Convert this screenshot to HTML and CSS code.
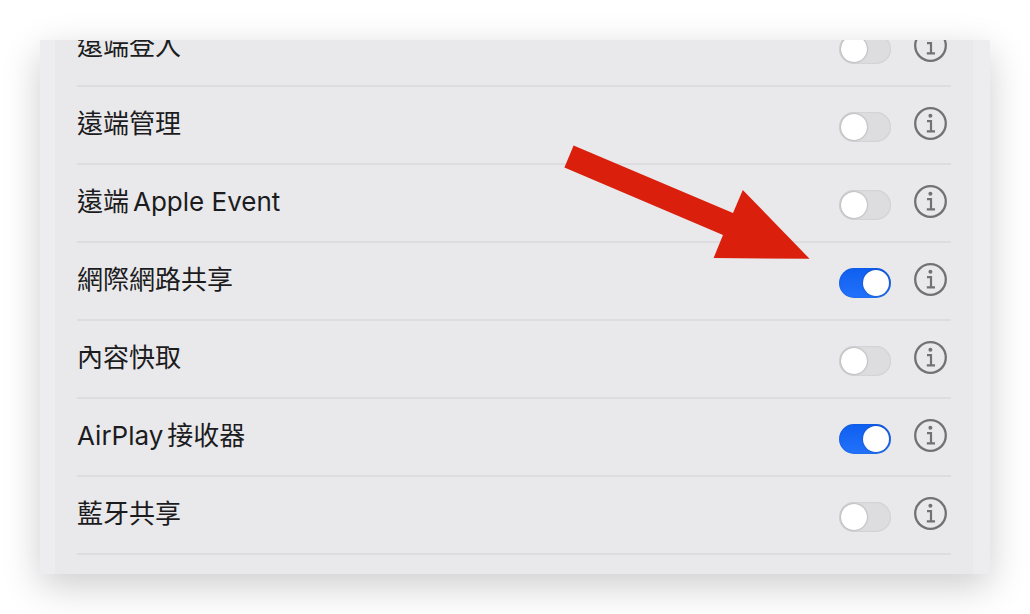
FILE: index.html
```html
<!DOCTYPE html>
<html lang="zh-Hant">
<head>
    <meta charset="UTF-8">
    <meta name="viewport" content="width=device-width, initial-scale=1.0">
    <title>共享</title>
    <link rel="stylesheet" href="styles.css">
</head>
<body>
    <svg class="sprite" aria-hidden="true">
        <symbol id="icon-info" viewBox="0 0 33 33">
            <circle cx="16.5" cy="16.5" r="15.3" fill="none" stroke="currentColor" stroke-width="2.3"/>
            <circle cx="16.4" cy="8.7" r="2" fill="currentColor"/>
            <path d="M13 14.2H17V24.4M12.8 24.4H21" fill="none" stroke="currentColor" stroke-width="2.2"/>
        </symbol>
    </svg>

    <main class="window">
        <div class="panel">
            <ul class="services">
                <li class="service">
                    <label class="service-name" for="remote-login">遠端登入</label>
                    <input class="toggle" type="checkbox" role="switch" id="remote-login">
                    <button class="info" type="button" aria-label="遠端登入"><svg><use href="#icon-info"/></svg></button>
                </li>
                <li class="service">
                    <label class="service-name" for="remote-management">遠端管理</label>
                    <input class="toggle" type="checkbox" role="switch" id="remote-management">
                    <button class="info" type="button" aria-label="遠端管理"><svg><use href="#icon-info"/></svg></button>
                </li>
                <li class="service">
                    <label class="service-name" for="remote-events"><span>遠端</span> <span>Apple Event</span></label>
                    <input class="toggle" type="checkbox" role="switch" id="remote-events">
                    <button class="info" type="button" aria-label="遠端 Apple Event"><svg><use href="#icon-info"/></svg></button>
                </li>
                <li class="service">
                    <label class="service-name" for="internet-sharing">網際網路共享</label>
                    <input class="toggle" type="checkbox" role="switch" id="internet-sharing" checked>
                    <button class="info" type="button" aria-label="網際網路共享"><svg><use href="#icon-info"/></svg></button>
                </li>
                <li class="service">
                    <label class="service-name" for="content-caching">內容快取</label>
                    <input class="toggle" type="checkbox" role="switch" id="content-caching">
                    <button class="info" type="button" aria-label="內容快取"><svg><use href="#icon-info"/></svg></button>
                </li>
                <li class="service">
                    <label class="service-name" for="airplay"><span>AirPlay</span> <span>接收器</span></label>
                    <input class="toggle" type="checkbox" role="switch" id="airplay" checked>
                    <button class="info" type="button" aria-label="AirPlay 接收器"><svg><use href="#icon-info"/></svg></button>
                </li>
                <li class="service">
                    <label class="service-name" for="bluetooth">藍牙共享</label>
                    <input class="toggle" type="checkbox" role="switch" id="bluetooth">
                    <button class="info" type="button" aria-label="藍牙共享"><svg><use href="#icon-info"/></svg></button>
                </li>
            </ul>
        </div>

        <!-- arrow pointing at the internet sharing switch -->
        <svg class="arrow" viewBox="0 0 246 114" aria-hidden="true">
            <path d="M9.6 .6L169 68L178.8 45L245.6 113.8L149.6 113L159 90L.4 22.4Z" fill="#db1f0d"/>
        </svg>
    </main>
</body>
</html>
```
FILE: styles.css
```css
* {
    margin: 0;
    padding: 0;
    box-sizing: border-box;
}

body {
    padding: 40px;
    background: #fff;
    color: #1c1c1e;
    font-family: Inter, "Noto Sans CJK TC", sans-serif;
    font-size: 26px;
}

.sprite {
    display: none;
}

.window {
    position: relative;
    overflow: hidden;
    padding: 0 17px 0 15px;
    background: #ededef;
    box-shadow: 0 12px 36px rgba(0, 0, 0, 0.2);
}

.panel {
    padding: 0 22px 19px;
    background: #e9e9eb;
}

/* list is scrolled, the first row is cut by the window edge */
.services {
    margin-top: -31px;
    list-style: none;
}

.service {
    display: flex;
    align-items: flex-start;
    gap: 23px;
    padding: 20px 4px 21px 0;
    border-bottom: 2px solid #dddddf;
}

.service-name {
    flex: 1;
    display: flex;
    gap: 4px;
    line-height: 34px;
}

.toggle {
    appearance: none;
    align-self: flex-end;
    display: flex;
    align-items: center;
    width: 52px;
    height: 30px;
    margin-top: 5px;
    padding: 0 2px;
    border-radius: 15px;
    background: #dddddf;
    box-shadow: inset 0 0 2px rgba(0, 0, 0, 0.16);
    cursor: pointer;
}

.toggle::before {
    content: "";
    width: 26px;
    height: 26px;
    border-radius: 50%;
    background: #fff;
    box-shadow: 0 0 2px rgba(0, 0, 0, 0.4);
}

.toggle:checked {
    justify-content: flex-end;
    background: linear-gradient(#0f5ff0, #2372fb);
}

.info {
    width: 33px;
    height: 33px;
    border: none;
    background: none;
    color: #727274;
    cursor: pointer;
}

.info svg {
    display: block;
    width: 100%;
    height: 100%;
}

.arrow {
    position: absolute;
    top: 105px;
    right: 180px;
    width: 246px;
    height: 114px;
    pointer-events: none;
}
```
